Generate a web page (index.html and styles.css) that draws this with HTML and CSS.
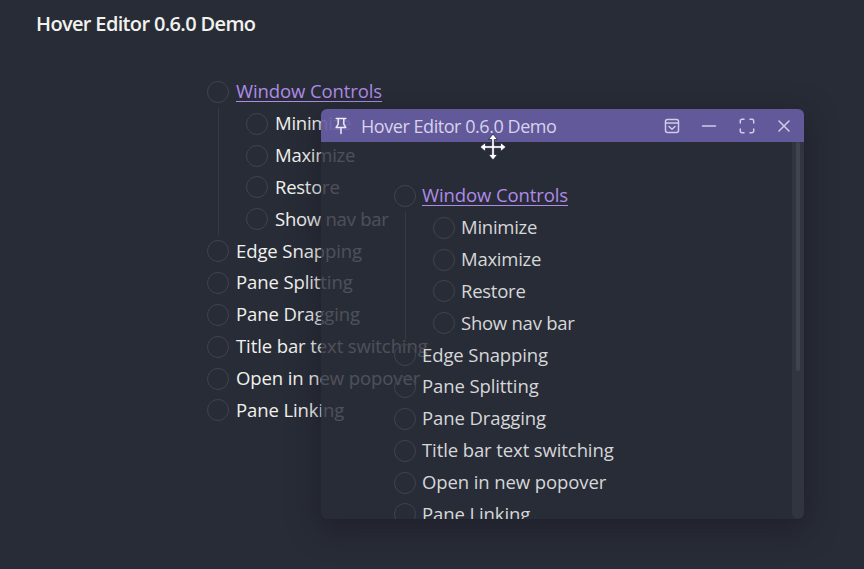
FILE: index.html
```html
<!DOCTYPE html>
<html lang="en">
<head>
<meta charset="utf-8">
<title>Hover Editor 0.6.0 Demo</title>
<link rel="stylesheet" href="styles.css">
</head>
<body>
<main class="page">
  <h1 class="title">Hover Editor 0.6.0 Demo</h1>
  <ul class="tasks">
    <li><div class="row"><i class="check"></i><a class="link">Window Controls</a></div>
      <ul class="nested">
        <li class="row"><i class="check"></i><span>Minimize</span></li>
        <li class="row"><i class="check"></i><span>Maximize</span></li>
        <li class="row"><i class="check"></i><span>Restore</span></li>
        <li class="row"><i class="check"></i><span>Show nav bar</span></li>
      </ul>
    </li>
    <li class="row"><i class="check"></i><span>Edge Snapping</span></li>
    <li class="row"><i class="check"></i><span>Pane Splitting</span></li>
    <li class="row"><i class="check"></i><span>Pane Dragging</span></li>
    <li class="row"><i class="check"></i><span>Title bar text switching</span></li>
    <li class="row"><i class="check"></i><span>Open in new popover</span></li>
    <li class="row"><i class="check"></i><span>Pane Linking</span></li>
  </ul>
</main>
<section class="popover">
  <header class="bar">
    <svg class="pin" width="18" height="20" viewBox="0 0 18 20"><path d="M4.200 2.500h9.600M6.200 3v5l-2 3.500h9.600l-2-3.500V3M9 11.500v6"/></svg>
    <span class="bar-title">Hover Editor 0.6.0 Demo</span>
    <div class="controls">
      <svg width="18" height="18" viewBox="0 0 18 18"><rect x="2.500" y="2.500" width="13" height="13" rx="2"/><path d="M2.500 6h13M6 9.500l3 2.700 3-2.700"/></svg>
      <svg width="18" height="18" viewBox="0 0 18 18"><path d="M2.500 9h13"/></svg>
      <svg width="18" height="18" viewBox="0 0 18 18"><path d="M2.300 6V4q0-1.700 1.700-1.700h2M12 2.300h2q1.700 0 1.700 1.700v2M15.700 12v2q0 1.700-1.700 1.700h-2M6 15.700H4q-1.700 0-1.700-1.700v-2"/></svg>
      <svg width="18" height="18" viewBox="0 0 18 18"><path d="M4 4l10 10M14 4L4 14"/></svg>
    </div>
  </header>
  <div class="body">
    <ul class="tasks">
      <li><div class="row"><i class="check"></i><a class="link">Window Controls</a></div>
        <ul class="nested">
          <li class="row"><i class="check"></i><span>Minimize</span></li>
          <li class="row"><i class="check"></i><span>Maximize</span></li>
          <li class="row"><i class="check"></i><span>Restore</span></li>
          <li class="row"><i class="check"></i><span>Show nav bar</span></li>
        </ul>
      </li>
      <li class="row"><i class="check"></i><span>Edge Snapping</span></li>
      <li class="row"><i class="check"></i><span>Pane Splitting</span></li>
      <li class="row"><i class="check"></i><span>Pane Dragging</span></li>
      <li class="row"><i class="check"></i><span>Title bar text switching</span></li>
      <li class="row"><i class="check"></i><span>Open in new popover</span></li>
      <li class="row"><i class="check"></i><span>Pane Linking</span></li>
    </ul>
    <div class="track"><div class="thumb"></div></div>
  </div>
</section>
<svg class="cursor" width="28" height="28" viewBox="0 0 28 28"><path d="M14 1l4.500 5.500h-3.200v6.200h6.200V9.500L27 14l-5.500 4.500v-3.200h-6.200v6.200h3.200L14 27l-4.500-5.500h3.200v-6.200H6.500v3.200L1 14l5.500-4.500v3.200h6.200V6.500H9.500z"/></svg>
</body>
</html>
```
FILE: styles.css
```css
* { box-sizing: border-box; }
body {
  margin: 0;
  height: 569px;
  overflow: hidden;
  position: relative;
  background: #282c37;
  color: #f1f2ee;
  font-family: "Open Sans", "Noto Sans", sans-serif;
  font-size: 18.5px;
}
ul { list-style: none; margin: 0; padding: 0; }
.title {
  margin: 0;
  padding: 9px 0 0 36px;
  height: 76px;
  font-size: 20px;
  line-height: 30px;
  font-weight: 600;
  letter-spacing: -0.65px;
}
.page .tasks { padding-left: 207px; }
.row {
  display: flex;
  align-items: center;
  gap: 7px;
  height: 31.85px;
  letter-spacing: -0.1px;
  white-space: nowrap;
}
.row > span, .row > a { margin-bottom: 2px; }
.nested .row { letter-spacing: -0.25px; }
.check {
  flex: none;
  width: 22px;
  height: 22px;
  border: 1.5px solid #3f434e;
  border-radius: 50%;
}
.link {
  color: #ae8be6;
  text-decoration: underline;
  text-decoration-thickness: 1px;
  text-underline-offset: 3px;
}
.nested {
  margin-left: 11px;
  padding-left: 27px;
  border-left: 1px solid #363a45;
}
.popover {
  position: absolute;
  left: 321px;
  top: 109px;
  width: 483px;
  height: 410px;
  border-radius: 6px;
  overflow: hidden;
  box-shadow: 0 8px 30px rgba(20, 20, 30, .5);
  color: #d6d7d8;
}
.bar {
  display: flex;
  align-items: center;
  height: 33px;
  padding: 0 11px 0 11px;
  background: rgba(103, 93, 163, .93);
}
.bar svg, .cursor { display: block; }
.bar svg { fill: none; stroke: #d2cce8; stroke-width: 1.5; stroke-linecap: round; stroke-linejoin: round; }
.bar .pin { stroke: #eeeaf8; }
.bar-title { margin-left: 11px; font-size: 18px; letter-spacing: -0.45px; color: #d8d2ea; }
.controls { display: flex; gap: 19.5px; margin-left: auto; }
.body {
  display: flex;
  justify-content: space-between;
  height: 377px;
  background: rgba(40, 44, 55, .82);
}
.body .tasks { padding: 38px 0 0 73px; }
.body .row { gap: 6px; }
.track { width: 12px; background: #31353f; border-radius: 0 0 6px 6px; }
.thumb { width: 4px; height: 229px; margin: 0 auto; background: #40444e; border-radius: 2px; }
.cursor { position: absolute; left: 479px; top: 133px; fill: #fff; stroke: #202040; stroke-width: .8; }
```
